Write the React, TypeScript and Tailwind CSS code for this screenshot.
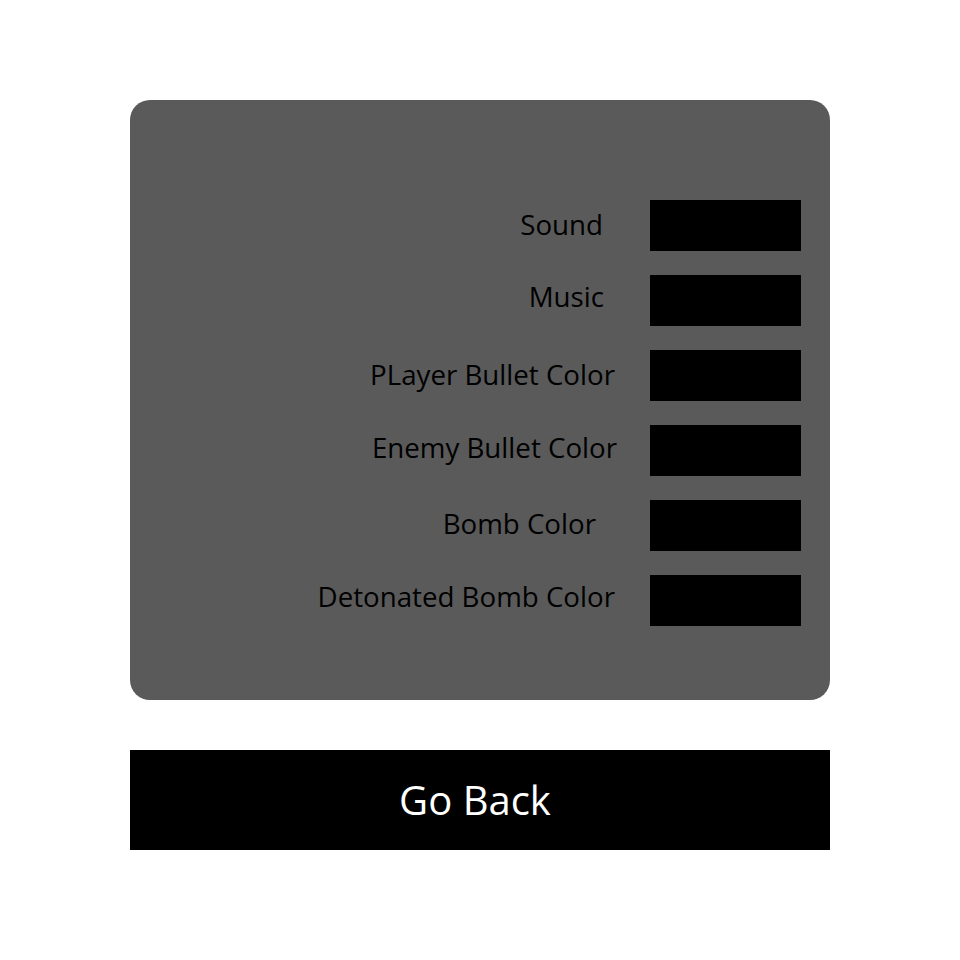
const settings = [
  { label: "Sound", nudge: "mr-[12px] mb-[1px]" },
  { label: "Music", nudge: "mr-[11px] mb-[6px]" },
  { label: "PLayer Bullet Color", nudge: "mr-0 mb-0" },
  { label: "Enemy Bullet Color", nudge: "-mr-[2px] mb-[4px]" },
  { label: "Bomb Color", nudge: "mr-[19px] mb-[2px]" },
  { label: "Detonated Bomb Color", nudge: "mr-0 mb-[6px]" },
];

export default function App() {
  return (
    <div className="min-h-[960px] w-[960px] bg-white font-['Open_Sans',sans-serif]">
      <div className="flex flex-col gap-[50px] px-[130px] pt-[100px]">
        <div className="h-[600px] rounded-[20px] bg-[#5a5a5a] pt-[100px]">
          <div className="flex flex-col gap-[25px]">
            {settings.map((s) => (
              <div key={s.label} className="flex h-[50px] items-center">
                <div className="flex w-[485px] justify-end">
                  <span
                    className={`text-[27.7px] leading-none text-black ${s.nudge}`}
                  >
                    {s.label}
                  </span>
                </div>
                <div className="ml-[35px] h-[51px] w-[151px] bg-black" />
              </div>
            ))}
          </div>
        </div>

        <button className="flex h-[100px] items-center justify-center bg-black pr-[10px] text-[40px] text-white">
          Go Back
        </button>
      </div>
    </div>
  );
}
